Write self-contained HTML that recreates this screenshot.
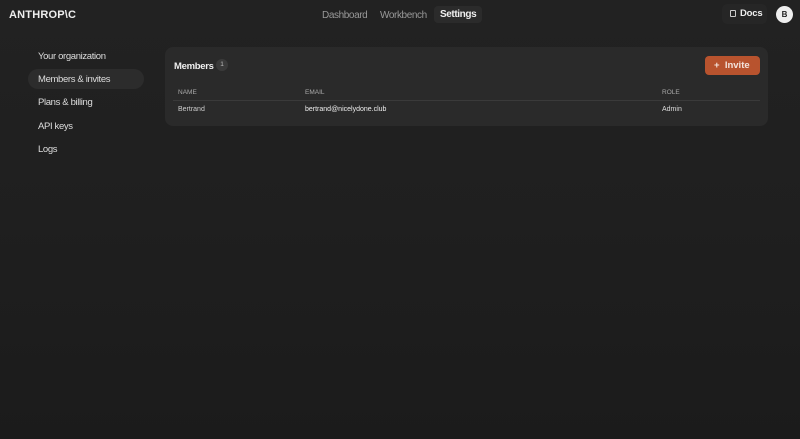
<!DOCTYPE html>
<html><head><meta charset="utf-8"><style>
*{margin:0;padding:0;box-sizing:border-box}
body{width:800px;height:439px;overflow:hidden;background:linear-gradient(#222 0%,#1f1f1f 50%,#1b1b1b 100%);font-family:"Liberation Sans",sans-serif;color:#e8e8e6;position:relative}
.a{position:absolute;white-space:nowrap}
.logo{left:9px;top:9px;font-weight:bold;font-size:11px;letter-spacing:0.2px;color:#eee}
.nav{top:6px;height:17px;font-size:10px;color:#999;line-height:17px;letter-spacing:-0.4px}
.sel{background:#2b2b2b;border-radius:4px;color:#eee;font-weight:bold;padding:0 6px}
.side{left:38px;font-size:9.5px;color:#ddd;letter-spacing:-0.35px}
.card{left:165px;top:47px;width:603px;height:79px;background:#2a2a2a;border-radius:8px}
.th{font-size:6.5px;color:#aaa;top:89px}
.td{font-size:7px;top:106px}
</style></head><body>
<div class="a logo">ANTHROP\C</div>
<div class="a nav" style="left:322px;top:7px">Dashboard</div>
<div class="a nav" style="left:380px;top:7px">Workbench</div>
<div class="a nav sel" style="left:434px">Settings</div>
<div class="a" style="left:722px;top:4px;width:45px;height:20px;background:#262626;border-radius:5px;font-size:9.5px;font-weight:bold;line-height:20px;color:#eee;padding-left:8px;letter-spacing:-0.2px"><span style="display:inline-block;width:6px;height:7px;border:1px solid #ccc;border-radius:1px;margin-right:4px;vertical-align:-1px"></span>Docs</div>
<div class="a" style="left:776px;top:6px;width:17px;height:17px;border-radius:50%;background:#eee;color:#222;font-size:8px;font-weight:bold;text-align:center;line-height:17px">B</div>
<div class="a side" style="top:51px">Your organization</div>
<div class="a" style="left:28px;top:69px;width:116px;height:20px;background:#2c2c2c;border-radius:10px"></div>
<div class="a side" style="top:74px">Members &amp; invites</div>
<div class="a side" style="top:97px">Plans &amp; billing</div>
<div class="a side" style="top:121px">API keys</div>
<div class="a side" style="top:144px">Logs</div>
<div class="a card"></div>
<div class="a" style="left:174px;top:61px;font-size:9.5px;font-weight:bold;color:#eee;letter-spacing:-0.3px">Members</div>
<div class="a" style="left:216px;top:59px;width:12px;height:12px;border-radius:50%;background:#3a3a3a;font-size:6.5px;color:#bbb;text-align:center;line-height:12px">1</div>
<div class="a" style="left:705px;top:56px;width:55px;height:19px;background:#b8532e;border-radius:4px;color:#f3e3dc;font-size:9.5px;font-weight:bold;line-height:19px;padding-left:9px">+&nbsp;&nbsp;Invite</div>
<div class="a th" style="left:178px">NAME</div>
<div class="a th" style="left:305px">EMAIL</div>
<div class="a th" style="left:662px">ROLE</div>
<div class="a" style="left:173px;top:100px;width:587px;height:1px;background:#3a3a3a"></div>
<div class="a td" style="left:178px;color:#ccc">Bertrand</div>
<div class="a td" style="left:305px;color:#eee">bertrand@nicelydone.club</div>
<div class="a td" style="left:662px;color:#ddd">Admin</div>
</body></html>
